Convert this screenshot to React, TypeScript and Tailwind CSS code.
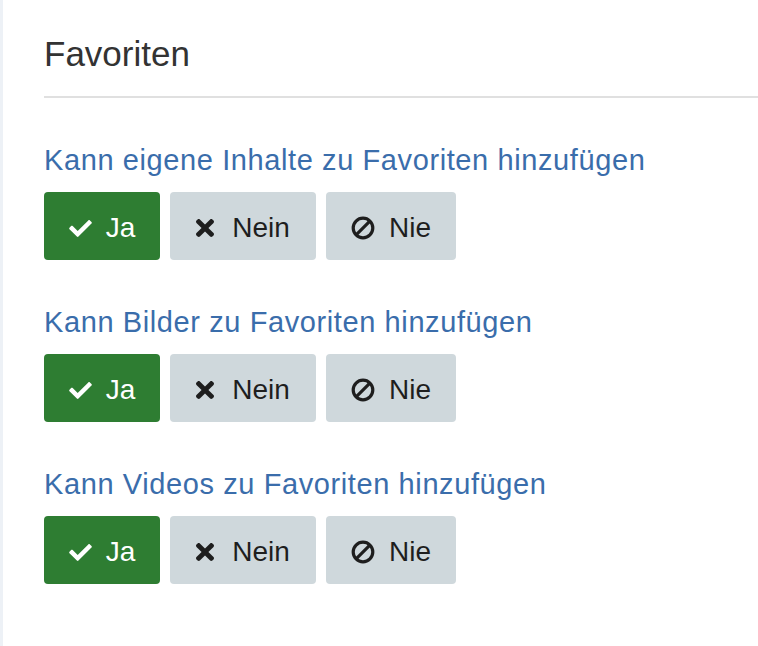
const font = { fontFamily: '"Liberation Sans", Arial, sans-serif' };

function CheckIcon() {
  return (
    <svg viewBox="0 64 512 384" className="w-[23px] h-[17px]" fill="currentColor">
      <path d="M173.898 439.404l-166.4-166.4c-9.997-9.997-9.997-26.206 0-36.204l36.203-36.204c9.997-9.998 26.207-9.998 36.204 0L192 312.69 432.095 72.596c9.997-9.997 26.207-9.997 36.204 0l36.203 36.204c9.997 9.997 9.997 26.206 0 36.204l-294.4 294.401c-9.998 9.997-26.207 9.997-36.204-.001z" />
    </svg>
  );
}

function XIcon() {
  return (
    <svg viewBox="0 80 352 352" className="w-[18px] h-[18px]" fill="currentColor">
      <path d="M242.72 256l100.07-100.07c12.28-12.28 12.28-32.19 0-44.48l-22.24-22.24c-12.28-12.28-32.19-12.28-44.48 0L176 189.28 75.93 89.21c-12.28-12.28-32.19-12.28-44.48 0L9.21 111.45c-12.28 12.28-12.28 32.19 0 44.480L109.28 256 9.21 356.07c-12.28 12.28-12.28 32.19 0 44.48l22.24 22.24c12.28 12.28 32.2 12.28 44.48 0L176 322.72l100.07 100.07c12.28 12.28 32.2 12.28 44.48 0l22.24-22.24c12.28-12.28 12.28-32.19 0-44.48L242.72 256z" />
    </svg>
  );
}

function BanIcon() {
  return (
    <svg viewBox="0 0 24 24" className="w-[24px] h-[24px]" fill="none" stroke="currentColor" strokeWidth="3.2">
      <circle cx="12" cy="12" r="9.8" />
      <line x1="18.6" y1="5.4" x2="5.4" y2="18.6" />
    </svg>
  );
}

function Choice({ label }: { label: string }) {
  return (
    <div className="mt-[44px]">
      <div className="text-[29px] leading-[36px] tracking-[0.6px] text-[#3a6dab]">{label}</div>
      <div className="mt-[14px] flex gap-[10px] text-[28px] leading-[42px]">
        <button className="flex h-[68px] w-[116px] items-center justify-center gap-[14px] rounded-[4px] bg-[#2e7d32] pt-1 text-white">
          <CheckIcon />
          <span>Ja</span>
        </button>
        <button className="flex h-[68px] w-[146px] items-center justify-center gap-[18px] rounded-[4px] bg-[#cfd8dc] pt-1 text-[#1e1e1e]">
          <XIcon />
          <span>Nein</span>
        </button>
        <button className="flex h-[68px] w-[130px] items-center justify-center gap-[14px] rounded-[4px] bg-[#cfd8dc] pt-1 text-[#1e1e1e]">
          <BanIcon />
          <span>Nie</span>
        </button>
      </div>
    </div>
  );
}

export default function App() {
  return (
    <div style={font} className="min-h-[646px] bg-white border-l-[3px] border-[#edf1f6] pl-[41px]">
      <h2 className="pt-[33px] pb-[21px] text-[35px] leading-[42px] text-[#333333] border-b-2 border-[#e0e0e0]">
        Favoriten
      </h2>
      <Choice label="Kann eigene Inhalte zu Favoriten hinzufügen" />
      <Choice label="Kann Bilder zu Favoriten hinzufügen" />
      <Choice label="Kann Videos zu Favoriten hinzufügen" />
    </div>
  );
}
